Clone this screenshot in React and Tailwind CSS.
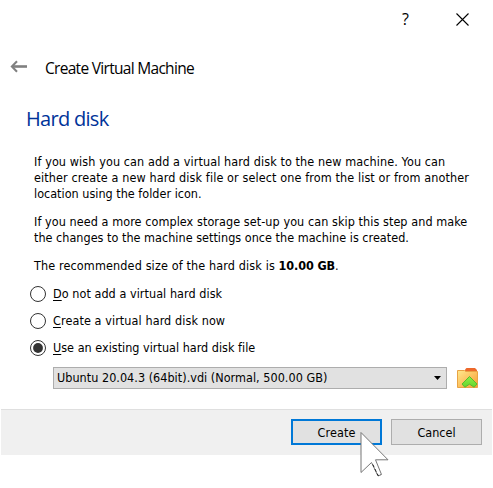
const paragraphs = [
  [
    { text: 'If you wish you can add a virtual hard disk to the new machine. You can', spacing: 'tracking-[0.1px]' },
    { text: 'either create a new hard disk file or select one from the list or from another', spacing: 'tracking-[0.11px]' },
    { text: 'location using the folder icon.', spacing: 'tracking-[0.01px]' },
  ],
  [
    { text: 'If you need a more complex storage set-up you can skip this step and make', spacing: 'tracking-[0.07px]' },
    { text: 'the changes to the machine settings once the machine is created.', spacing: 'tracking-[0.02px]' },
  ],
];

const options = [
  { label: 'Do not add a virtual hard disk', spacing: 'tracking-[0.05px]', checked: false },
  { label: 'Create a virtual hard disk now', spacing: 'tracking-[0.09px]', checked: false },
  { label: 'Use an existing virtual hard disk file', spacing: 'tracking-[0.01px]', checked: true },
];

function BackArrow() {
  return (
    <svg width="18" height="14" viewBox="0 0 18 14" fill="none" stroke="#808080">
      <path d="M2 6.5H17" strokeWidth="2.6" />
      <path d="M7 1.2L1.9 6.5L7 11.8" strokeWidth="2.1" />
    </svg>
  );
}

function FolderIcon() {
  return (
    <svg width="22" height="22" viewBox="0 0 22 22">
      <defs>
        <linearGradient id="folder" x1="0" y1="0" x2="1" y2="1">
          <stop offset="0" stopColor="#ffe98e" />
          <stop offset="1" stopColor="#f99c33" />
        </linearGradient>
        <linearGradient id="arrow" x1="0" y1="0" x2="0" y2="1">
          <stop offset="0" stopColor="#8fee45" />
          <stop offset="1" stopColor="#62d52d" />
        </linearGradient>
      </defs>
      <path d="M8 5V2.5L9.5 1H18L20 3V6H8Z" fill="#ed682b" />
      <path d="M.5 3.5H7.5L9 4.5H20.5V20.5H.5Z" fill="url(#folder)" stroke="#e9a344" />
      <path d="M12.5 9.5L20 17L17.2 20.2L12.5 17.2L7.8 20.2L5 17Z" fill="url(#arrow)" stroke="#59ba2b" strokeLinejoin="round" />
    </svg>
  );
}

function Cursor() {
  return (
    <svg className="absolute left-[69px] top-[12px]" width="32" height="48" viewBox="0 0 32 48">
      <path d="M1 1.5V41.5L11.5 31.5L18 45L21.5 43.5L15.5 28.8H28Z" fill="white" stroke="#777" />
      <path d="M12.8 33.5L18 44.5L21 43.5" fill="none" stroke="#222" strokeDasharray="3 2" />
    </svg>
  );
}

function Radio({ label, spacing, checked }) {
  return (
    <label className="flex h-[27px] items-center">
      <svg width="16" height="16" viewBox="0 0 16 16">
        <circle cx="8" cy="8" r="7.5" fill="white" stroke="#333" />
        {checked && <circle cx="8" cy="8" r="4.9" fill="#333" />}
      </svg>
      <span className={`ml-[7px] whitespace-nowrap ${spacing}`}>
        <span className="underline underline-offset-2">{label[0]}</span>{label.slice(1)}
      </span>
    </label>
  );
}

export default function App() {
  return (
    <div className="h-[488px] w-[493px] overflow-hidden bg-white font-['DejaVu_Sans_Condensed','DejaVu_Sans',sans-serif] text-[12.5px] leading-4 text-black [font-stretch:condensed]">
      <div className="flex h-[38px] items-center justify-end pr-[24px]">
        <span className="mr-[47px] font-['Open_Sans',sans-serif] text-[16px] [font-stretch:normal]">?</span>
        <svg width="13" height="13" viewBox="0 0 13 13" stroke="black" strokeWidth="1.1">
          <path d="M.5 .5L12.5 12.5M12.5 .5L.5 12.5" />
        </svg>
      </div>

      <div className="flex h-[58px] items-center pl-[10px] font-['Open_Sans',sans-serif] text-[15.5px] [font-stretch:normal]">
        <BackArrow />
        <span className="ml-[17px] pt-px tracking-[-0.7px]">Create Virtual Machine</span>
      </div>

      <h1 className="mt-[2px] flex h-[42px] items-center pl-[26px] font-['Open_Sans',sans-serif] text-[20px] tracking-[-0.7px] text-[#003399] [font-stretch:normal]">Hard disk</h1>

      <div className="flex flex-col gap-[12px] pt-[14px] pl-[34px] whitespace-nowrap">
        {paragraphs.map((lines, i) => (
          <div key={i}>
            {lines.map((line) => (
              <div key={line.text}><span className={line.spacing}>{line.text}</span></div>
            ))}
          </div>
        ))}
        <p className="tracking-[0.13px]">The recommended size of the hard disk is <b className="tracking-[-0.1px]">10.00 GB</b>.</p>
      </div>

      <div className="pt-[6px] pl-[30px]">
        {options.map((option) => (
          <Radio key={option.label} {...option} />
        ))}
      </div>

      <div className="mt-[6px] flex h-[22px] pl-[53px]">
        <div className="flex w-[394px] items-center justify-between border border-[#adadad] bg-[#e1e1e1] pr-[5px] pl-[3px]">
          <span className="tracking-[0.03px]">Ubuntu 20.04.3 (64bit).vdi (Normal, 500.00 GB)</span>
          <svg width="7" height="4" viewBox="0 0 7 4"><path d="M0 0H7L3.5 4Z" /></svg>
        </div>
        <div className="ml-[10px]"><FolderIcon /></div>
      </div>

      <div className="mx-px mt-[20px] flex h-[46px] justify-end gap-[9px] border-t border-[#dfdfdf] bg-[#f0f0f0] pt-[9px] pr-[10px]">
        <div className="relative h-[26px] w-[91px]">
          <button className="h-full w-full border-2 border-[#0078d7] bg-[#e1e1e1] pt-px tracking-[0.1px]">Create</button>
          <Cursor />
        </div>
        <button className="h-[26px] w-[91px] border border-[#adadad] bg-[#e1e1e1] pt-px">Cancel</button>
      </div>
    </div>
  );
}
